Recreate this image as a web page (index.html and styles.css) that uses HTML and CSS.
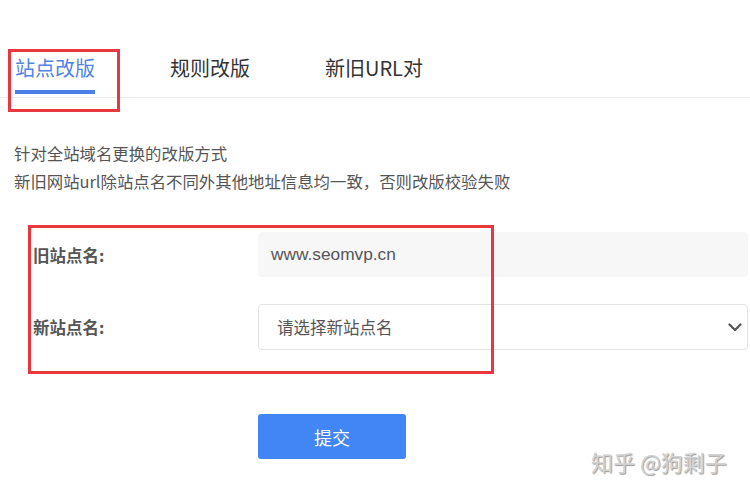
FILE: index.html
```html
<!DOCTYPE html>
<html lang="zh-CN">
<head>
<meta charset="utf-8">
<title>站点改版</title>
<link rel="stylesheet" href="styles.css">
</head>
<body>
<div class="page">
  <div class="tabs">
    <div class="tab active">站点改版</div>
    <div class="tab">规则改版</div>
    <div class="tab">新旧URL对</div>
  </div>

  <div class="desc">
    <p>针对全站域名更换的改版方式</p>
    <p>新旧网站url除站点名不同外其他地址信息均一致，否则改版校验失败</p>
  </div>

  <div class="form">
    <div class="row">
      <div class="label">旧站点名:</div>
      <div class="field readonly">www.seomvp.cn</div>
    </div>
    <div class="row row-select">
      <div class="label">新站点名:</div>
      <div class="field select">
        <span>请选择新站点名</span>
        <svg class="chev" width="14" height="9" viewBox="0 0 14 9"><path d="M1.5 1.5 L7 7 L12.5 1.5" fill="none" stroke="#555" stroke-width="2.2" stroke-linecap="round" stroke-linejoin="round"/></svg>
      </div>
    </div>
    <div class="actions">
      <button class="submit" type="button">提交</button>
    </div>
  </div>

  <div class="mark mark-tab"></div>
  <div class="mark mark-form"></div>
  <div class="watermark">知乎 @狗剩子</div>
</div>
</body>
</html>
```

FILE: styles.css
```css
html, body {
  margin: 0;
  padding: 0;
  background: #fff;
}
.page {
  position: relative;
  width: 750px;
  height: 495px;
  overflow: hidden;
  font-family: "Liberation Sans", "Noto Sans CJK SC", sans-serif;
  color: #333;
}
.tabs {
  display: flex;
  gap: 75px;
  padding-left: 15px;
  border-bottom: 1px solid #ececec;
  height: 97px;
}
.tab {
  padding-top: 55px;
  font-size: 20px;
  line-height: 26px;
  height: 39px;
  color: #333;
  font-family: "Noto Sans CJK SC", "Liberation Sans", sans-serif;
}
.tab.active {
  color: #4f84e6;
  border-bottom: 4px solid #4a80e8;
  height: 35px;
}
.desc {
  margin-top: 41px;
  padding-left: 14px;
  font-size: 16.4px;
  line-height: 28px;
  color: #555;
}
.desc p {
  margin: 0;
  font-family: "Noto Sans CJK SC", "Liberation Sans", sans-serif;
}
.form {
  margin-top: 37px;
  padding-left: 33px;
  padding-right: 2px;
  display: flex;
  flex-direction: column;
  gap: 27px;
}
.row {
  display: flex;
  align-items: center;
}
.label {
  width: 225px;
  font-size: 16.5px;
  font-weight: bold;
  color: #555;
  font-family: "Noto Sans CJK SC", "Liberation Sans", sans-serif;
}
.field {
  flex: 1;
  box-sizing: border-box;
  height: 45px;
  display: flex;
  align-items: center;
  border-radius: 4px;
  font-size: 16.5px;
  color: #555;
}
.readonly {
  background: #f7f7f7;
  padding-left: 13px;
  font-size: 17.3px;
}
.select {
  height: 46px;
  border: 1px solid #e3e3e3;
  padding-left: 18px;
  padding-right: 5px;
  justify-content: space-between;
  font-family: "Noto Sans CJK SC", "Liberation Sans", sans-serif;
}
.chev {
  display: block;
}
.actions {
  padding-left: 225px;
  margin-top: 37px;
}
.submit {
  width: 148px;
  height: 45px;
  border: none;
  border-radius: 3px;
  background: #4285f4;
  color: #fff;
  font-size: 18px;
  font-family: "Noto Sans CJK SC", "Liberation Sans", sans-serif;
  cursor: pointer;
}
.mark {
  position: absolute;
  border: 3px solid #e8383d;
  box-sizing: border-box;
}
.mark-tab {
  left: 8px;
  top: 49px;
  width: 112px;
  height: 63px;
}
.mark-form {
  left: 28px;
  top: 225px;
  width: 466px;
  height: 149px;
}
.watermark {
  position: absolute;
  left: 591px;
  top: 446px;
  font-size: 22px;
  line-height: 30px;
  color: #d2d2d2;
  text-shadow: 1px 1px 1px rgba(0, 0, 0, 0.4);
  font-family: "Noto Sans CJK SC", sans-serif;
}
```
